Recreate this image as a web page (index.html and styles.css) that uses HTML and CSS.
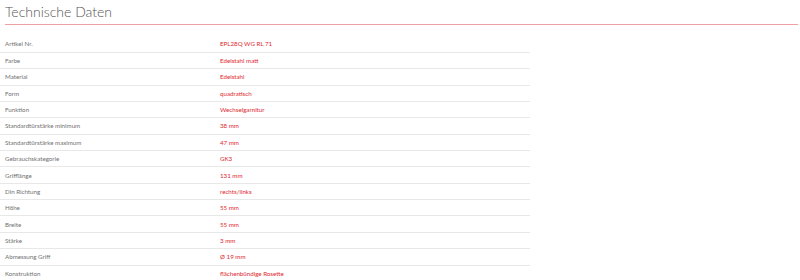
FILE: index.html
```html
<!DOCTYPE html>
<html lang="de">
<head>
<meta charset="utf-8">
<title>Technische Daten</title>
<link rel="stylesheet" href="styles.css">
</head>
<body>
<section class="specs">
  <h2 class="specs-title">Technische Daten</h2>
  <table class="specs-table">
    <tbody>
      <tr><td class="label">Artikel Nr.</td><td class="value">EPL28Q WG RL 71</td></tr>
      <tr><td class="label">Farbe</td><td class="value">Edelstahl matt</td></tr>
      <tr><td class="label">Material</td><td class="value">Edelstahl</td></tr>
      <tr><td class="label">Form</td><td class="value">quadratisch</td></tr>
      <tr><td class="label">Funktion</td><td class="value">Wechselgarnitur</td></tr>
      <tr><td class="label">Standardtürstärke minimum</td><td class="value">38 mm</td></tr>
      <tr><td class="label">Standardtürstärke maximum</td><td class="value">47 mm</td></tr>
      <tr><td class="label">Gebrauchskategorie</td><td class="value">GK3</td></tr>
      <tr><td class="label">Grifflänge</td><td class="value">131 mm</td></tr>
      <tr><td class="label">Din Richtung</td><td class="value">rechts/links</td></tr>
      <tr><td class="label">Höhe</td><td class="value">55 mm</td></tr>
      <tr><td class="label">Breite</td><td class="value">55 mm</td></tr>
      <tr><td class="label">Stärke</td><td class="value">3 mm</td></tr>
      <tr><td class="label">Abmessung Griff</td><td class="value">Ø 19 mm</td></tr>
      <tr><td class="label">Konstruktion</td><td class="value">flächenbündige Rosette</td></tr>
    </tbody>
  </table>
</section>
</body>
</html>
```

FILE: styles.css
```css
html, body {
  margin: 0;
  padding: 0;
  background: #ffffff;
}
body {
  font-family: Lato, "Open Sans", sans-serif;
  overflow: hidden;
}
.specs-title {
  margin: 0 2px 0 5px;
  padding: 3px 0 4px;
  font-size: 14px;
  font-weight: 300;
  line-height: 17px;
  color: #555555;
  border-bottom: 1px solid #f0a0a2;
}
.specs-table {
  margin-top: 11px;
  width: 530px;
  border-collapse: collapse;
}
.specs-table tr {
  height: 16.36px;
  border-bottom: 1px solid #e8e8e8;
}
.specs-table td {
  padding: 0;
  font-size: 6.2px;
  line-height: 15px;
  vertical-align: middle;
}
.specs-table td.label {
  width: 215px;
  padding-left: 5px;
  color: #707070;
}
.specs-table td.value {
  color: #e0262c;
}
```
